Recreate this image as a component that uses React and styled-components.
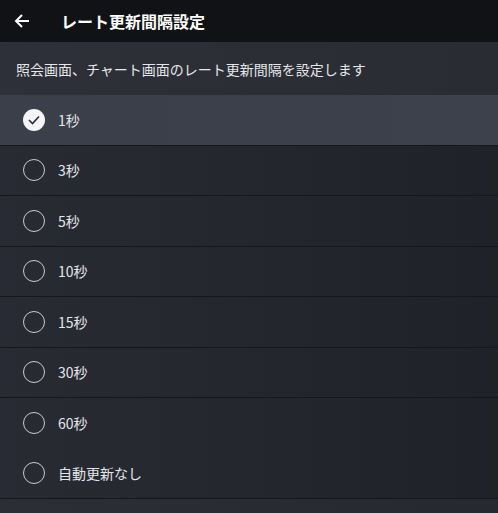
import styled, { createGlobalStyle } from "styled-components";
import { useState } from "react";

const GlobalStyle = createGlobalStyle`
  html, body {
    margin: 0;
    padding: 0;
    background: #2a2d35;
    font-family: "Noto Sans CJK JP", "Noto Sans", sans-serif;
  }
`;

const OPTIONS = ["1秒", "3秒", "5秒", "10秒", "15秒", "30秒", "60秒", "自動更新なし"];

const Page = styled.div`
  width: 498px;
  min-height: 513px;
  display: flex;
  flex-direction: column;
  background: linear-gradient(90deg, #2b2e36 0%, #262930 100%);
`;

const Header = styled.header`
  height: 42px;
  display: flex;
  align-items: center;
  background: #111215;
  box-shadow: 0 1px 2px rgba(0, 0, 0, 0.5);
`;

const BackButton = styled.button`
  width: 44px;
  height: 42px;
  display: flex;
  align-items: center;
  justify-content: center;
  background: none;
  border: none;
  padding: 0;
  cursor: pointer;
`;

const Title = styled.h1`
  margin: 0 0 0 17px;
  font-size: 16px;
  font-weight: 700;
  color: #ffffff;
`;

const Description = styled.p`
  margin: 0;
  height: 53px;
  display: flex;
  align-items: center;
  padding: 0 16px;
  font-size: 14px;
  color: #e6e7ea;
  background: linear-gradient(90deg, #2d3038 0%, #292c33 100%);
`;

const List = styled.ul`
  list-style: none;
  margin: 0;
  padding: 0;
`;

const Row = styled.li`
  height: 50.5px;
  box-sizing: border-box;
  display: flex;
  align-items: center;
  padding-left: 23px;
  gap: 13px;
  cursor: pointer;
  border-bottom: ${(p) => (p.$noLine ? "none" : "1px solid #15171b")};
  background: ${(p) =>
    p.$selected
      ? "linear-gradient(90deg, #3b3f4a 0%, #3d414c 100%)"
      : "linear-gradient(90deg, #282b33 0%, #1f2227 100%)"};
`;

const Radio = styled.span`
  width: 22px;
  height: 22px;
  box-sizing: border-box;
  border-radius: 50%;
  display: flex;
  align-items: center;
  justify-content: center;
  border: ${(p) => (p.$checked ? "none" : "1.5px solid #c9cbd0")};
  background: ${(p) => (p.$checked ? "#f4f5f7" : "transparent")};
`;

const Label = styled.span`
  font-size: 14px;
  color: #e4e6ea;
`;

const App = () => {
  const [selected, setSelected] = useState(0);

  return (
    <>
      <GlobalStyle />
      <Page>
        <Header>
          <BackButton aria-label="戻る">
            <svg width="16" height="16" viewBox="0 0 16 16" fill="none">
              <path d="M15 8H2M8 2L2 8l6 6" stroke="#fff" strokeWidth="2" />
            </svg>
          </BackButton>
          <Title>レート更新間隔設定</Title>
        </Header>
        <Description>照会画面、チャート画面のレート更新間隔を設定します</Description>
        <List>
          {OPTIONS.map((opt, i) => (
            <Row
              key={opt}
              $selected={selected === i}
              $noLine={i === OPTIONS.length - 2}
              onClick={() => setSelected(i)}
            >
              <Radio $checked={selected === i}>
                {selected === i && (
                  <svg width="12" height="10" viewBox="0 0 12 10" fill="none">
                    <path d="M1 5l3.5 3.5L11 1.5" stroke="#2a2d34" strokeWidth="1.6" />
                  </svg>
                )}
              </Radio>
              <Label>{opt}</Label>
            </Row>
          ))}
        </List>
      </Page>
    </>
  );
};

export default App;
